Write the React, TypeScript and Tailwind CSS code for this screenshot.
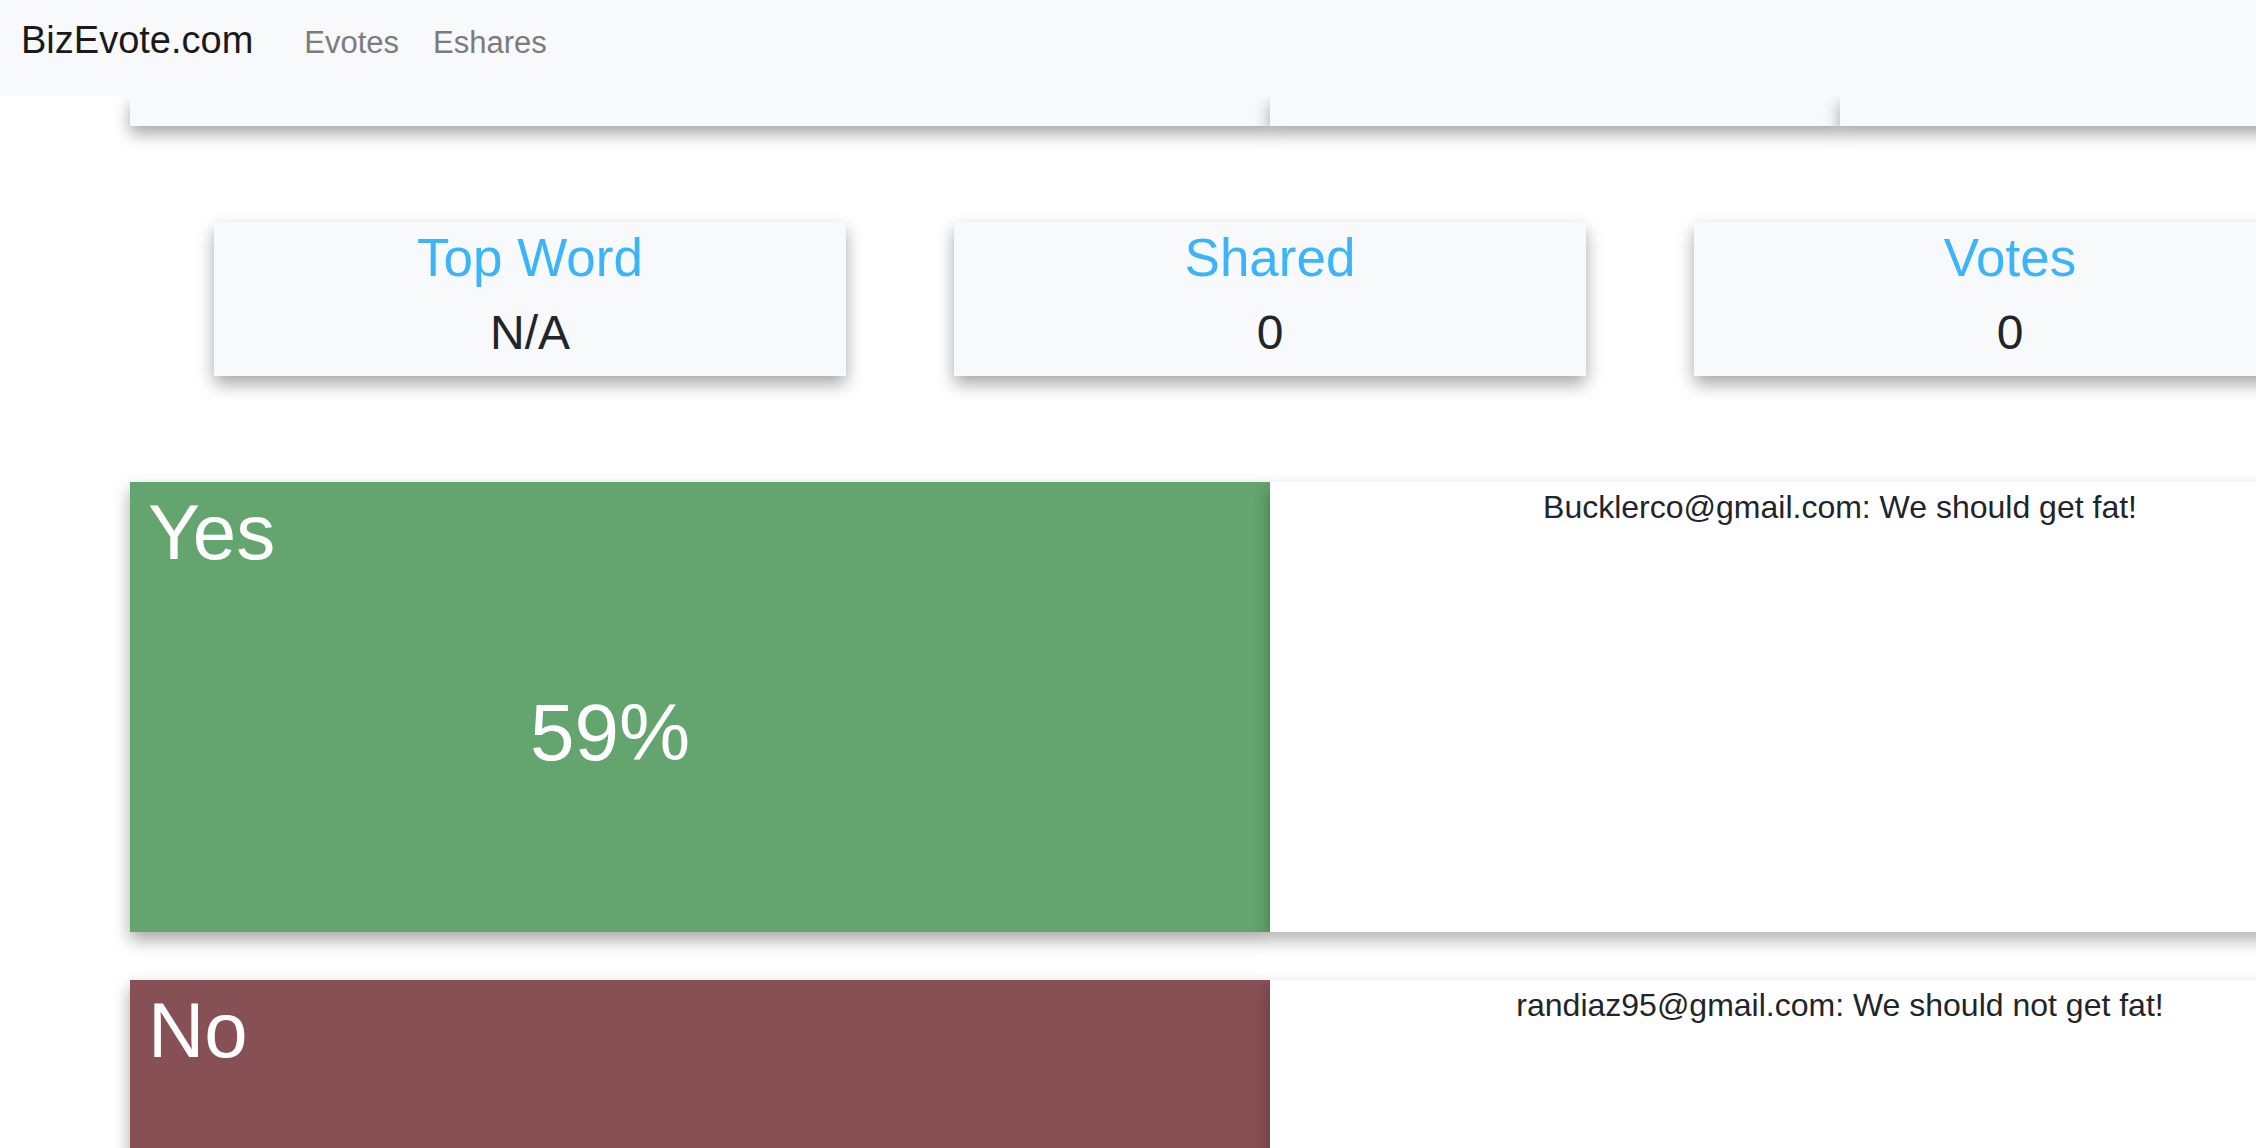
export default function App() {
  const stats = [
    { title: "Top Word", value: "N/A" },
    { title: "Shared", value: "0" },
    { title: "Votes", value: "0" },
  ];

  const options = [
    {
      label: "Yes",
      percent: "59%",
      bg: "bg-[#64a46e]",
      comment: "Bucklerco@gmail.com: We should get fat!",
    },
    {
      label: "No",
      percent: "",
      bg: "bg-[#875055]",
      comment: "randiaz95@gmail.com: We should not get fat!",
    },
  ];

  return (
    <div className="min-h-screen w-full overflow-hidden bg-white font-['Liberation_Sans',Arial,sans-serif] text-[#212529]">
      <nav className="relative z-10 flex h-[96px] items-baseline bg-[#f8f9fa] pl-[21px] pt-[21px]">
        <a className="text-[38px] leading-none text-[#1a1a1a]">BizEvote.com</a>
        <a className="ml-[51px] text-[31px] leading-none text-[#7c7c7d]">Evotes</a>
        <a className="ml-[34px] text-[31px] leading-none text-[#7c7c7d]">Eshares</a>
      </nav>

      <div className="w-[2410px] pl-[130px]">
        {/* cards scrolled under the navbar */}
        <div className="flex h-[30px]">
          <div className="w-[1140px] shrink-0 bg-[#f8f9fa] shadow-[0_8px_16px_rgba(0,0,0,0.35)]" />
          <div className="w-[570px] shrink-0 bg-[#f8f9fa] shadow-[0_8px_16px_rgba(0,0,0,0.35)]" />
          <div className="w-[570px] shrink-0 bg-[#f8f9fa] shadow-[0_8px_16px_rgba(0,0,0,0.35)]" />
        </div>

        <div className="mt-[96px] flex gap-[108px] pl-[84px]">
          {stats.map((s) => (
            <div
              key={s.title}
              className="h-[154px] w-[632px] shrink-0 bg-[#f8f9fa] pt-[9px] text-center shadow-[0_8px_16px_rgba(0,0,0,0.35)]"
            >
              <h1 className="text-[53px] font-medium leading-none text-[#3bb4fb]">{s.title}</h1>
              <h2 className="mt-[25px] text-[48px] leading-none text-[#212529]">{s.value}</h2>
            </div>
          ))}
        </div>

        <div className="mt-[106px] flex flex-col gap-[48px]">
          {options.map((o) => (
            <div key={o.label} className="flex h-[450px]">
              <div
                className={`${o.bg} flex w-[1140px] shrink-0 flex-col pl-[18px] pt-[11px] text-white shadow-[0_8px_16px_rgba(0,0,0,0.35)]`}
              >
                <h1 className="text-[78px] leading-none">{o.label}</h1>
                {o.percent && (
                  <div className="mt-[122px] pl-[382px] text-[80px] leading-none">{o.percent}</div>
                )}
              </div>
              <div className="w-[1140px] shrink-0 bg-white pt-[9px] text-center shadow-[0_8px_16px_rgba(0,0,0,0.3)]">
                <p className="text-[32px] leading-none text-[#212529]">{o.comment}</p>
              </div>
            </div>
          ))}
        </div>
      </div>
    </div>
  );
}
